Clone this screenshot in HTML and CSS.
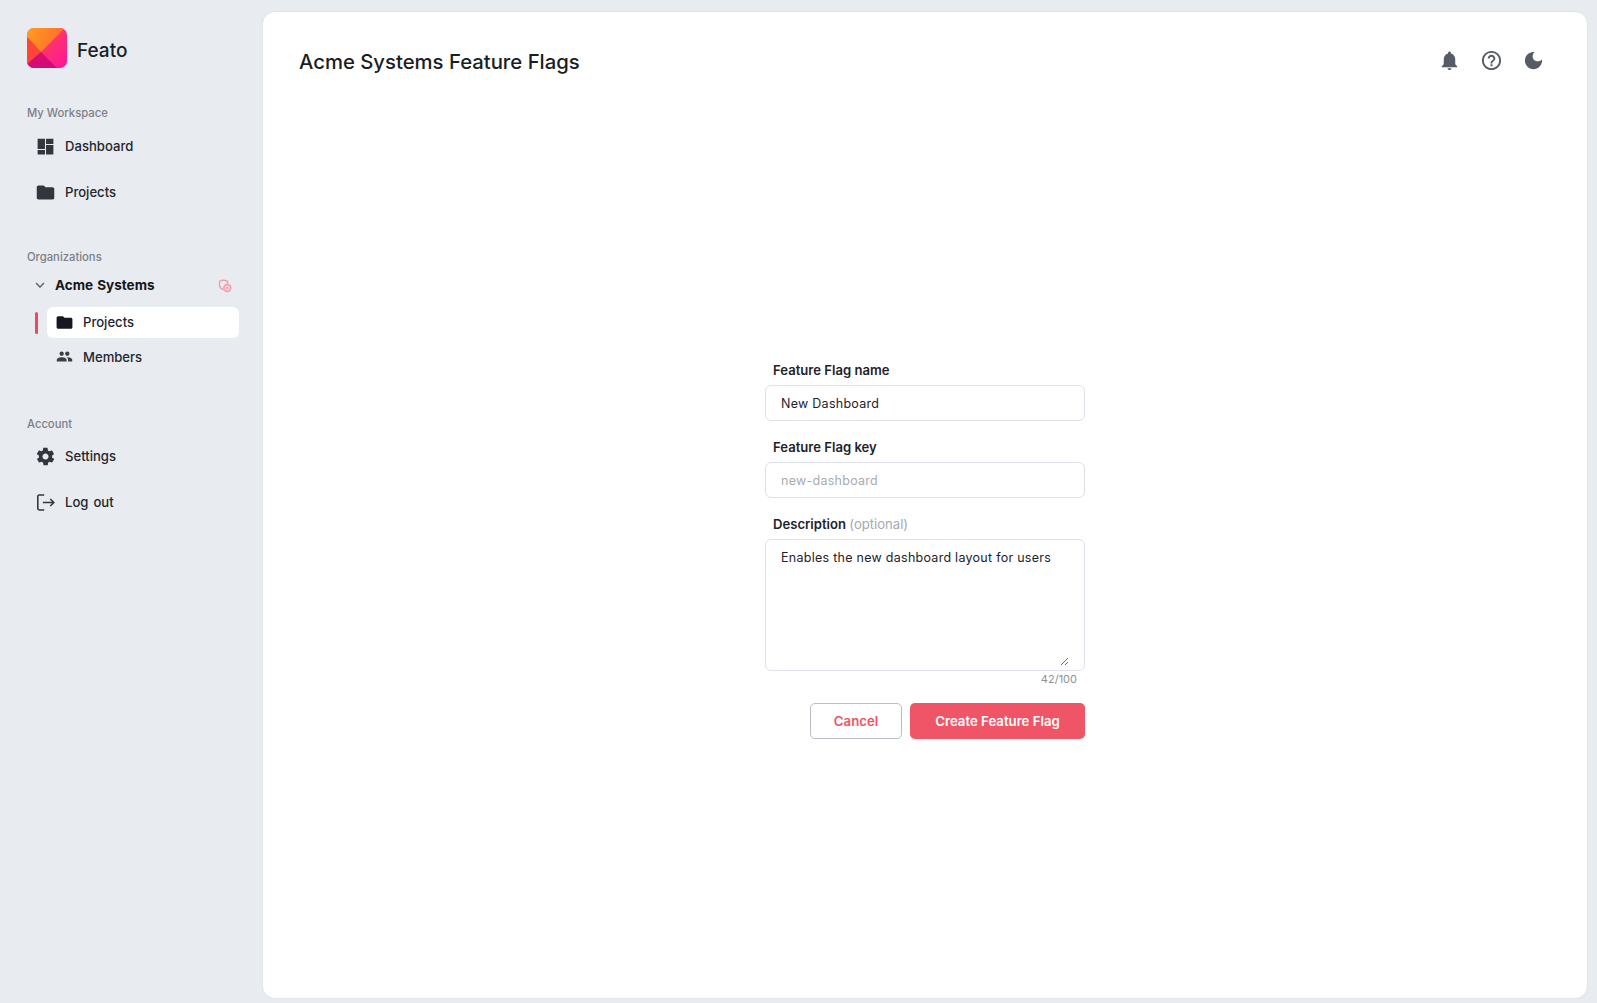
FILE: index.html
```html
<!DOCTYPE html>
<html lang="en">
<head>
<meta charset="utf-8">
<title>Feato</title>
<link rel="stylesheet" href="styles.css">
</head>
<body>
<div class="app">
  <aside class="sidebar">
    <div class="brand">
      <svg class="logo" width="40" height="40" viewBox="0 0 40 40">
        <defs>
          <linearGradient id="lgA" x1="0" y1="0" x2="1" y2="0.3"><stop offset="0" stop-color="#ff9f1c"/><stop offset="1" stop-color="#ff6a30"/></linearGradient>
          <linearGradient id="lgB" x1="0" y1="0" x2="1" y2="1"><stop offset="0" stop-color="#ff5040"/><stop offset="1" stop-color="#ff149b"/></linearGradient>
          <linearGradient id="lgC" x1="0" y1="0" x2="1" y2="1"><stop offset="0" stop-color="#d9105e"/><stop offset="1" stop-color="#d00a86"/></linearGradient>
          <clipPath id="lgClip"><rect width="40" height="40" rx="7"/></clipPath>
        </defs>
        <g clip-path="url(#lgClip)">
          <rect width="40" height="40" fill="url(#lgB)"/>
          <polygon points="0,0 38,0 14,24 0,9" fill="url(#lgA)"/>
          <polygon points="0,9 14,24 0,36" fill="#ff4538"/>
          <polygon points="14,24 30,40 0,40 0,36" fill="url(#lgC)"/>
        </g>
      </svg>
      <span class="brand-name">Feato</span>
    </div>

    <section class="nav-group nav-workspace">
      <h2 class="nav-title">My Workspace</h2>
      <a class="nav-item">
        <svg class="nav-icon" viewBox="0 0 24 24"><path d="M3 3h8.400v11.800H3zM12.600 3H21v6.200h-8.400zM12.600 10.300H21V21h-8.400zM3 15.900h8.400V21H3z"/></svg>
        <span>Dashboard</span>
      </a>
      <a class="nav-item">
        <svg class="nav-icon" viewBox="0 0 24 24"><path d="M10 4H4C2.900 4 2 4.900 2 6v12c0 1.100.9 2 2 2h16c1.100 0 2-.9 2-2V8c0-1.100-.9-2-2-2h-8z"/></svg>
        <span>Projects</span>
      </a>
    </section>

    <section class="nav-group nav-orgs">
      <h2 class="nav-title">Organizations</h2>
      <div class="org-row">
        <svg class="chevron" width="12" height="12" viewBox="0 0 12 12"><path d="M2 4l4 4 4-4" fill="none" stroke="#555c66" stroke-width="1.300"/></svg>
        <span class="org-name">Acme Systems</span>
        <svg class="org-badge" width="14" height="14" viewBox="0 0 14 14"><path d="M1.500 2.200 5.500 1l4 1.200v2.600M1.500 2.200v3.300c0 2.600 1.600 4.300 4 5.300" fill="none" stroke="#f39aa6" stroke-width="1.400"/><circle cx="9.300" cy="9" r="3.500" fill="#f9d0d6" stroke="#f39aa6" stroke-width="1.400"/><circle cx="9.300" cy="9" r="1" fill="#f39aa6"/></svg>
      </div>
      <div class="sub-row">
        <span class="sub-marker"></span>
        <a class="sub-item sub-active">
          <svg class="sub-icon" viewBox="0 0 24 24"><path d="M10 4H4C2.900 4 2 4.900 2 6v12c0 1.100.9 2 2 2h16c1.100 0 2-.9 2-2V8c0-1.100-.9-2-2-2h-8z"/></svg>
          <span>Projects</span>
        </a>
      </div>
      <div class="sub-row">
        <span class="sub-marker sub-marker-off"></span>
        <a class="sub-item">
          <svg class="sub-icon sub-icon-muted" viewBox="-1.500 -1.500 27 27"><path d="M16 11c1.700 0 3-1.300 3-3s-1.300-3-3-3-3 1.300-3 3 1.300 3 3 3zm-8 0c1.700 0 3-1.300 3-3S9.700 5 8 5 5 6.300 5 8s1.300 3 3 3zm0 2c-2.300 0-7 1.200-7 3.500V19h14v-2.500C15 14.200 10.300 13 8 13zm8 0c-.3 0-.6 0-1 .1 1.200.8 2 2 2 3.400V19h6v-2.500c0-2.300-4.700-3.500-7-3.500z"/></svg>
          <span>Members</span>
        </a>
      </div>
    </section>

    <section class="nav-group nav-account">
      <h2 class="nav-title">Account</h2>
      <a class="nav-item">
        <svg class="nav-icon" viewBox="0 0 24 24"><path d="M19.400 13c.1-.3.100-.7.100-1s0-.7-.1-1l2.100-1.600c.2-.2.200-.4.100-.6l-2-3.500c-.1-.2-.4-.3-.6-.2l-2.500 1c-.5-.4-1.100-.7-1.700-1l-.4-2.600c0-.3-.2-.5-.5-.5h-4c-.3 0-.5.200-.5.400l-.4 2.700c-.6.200-1.100.6-1.700 1l-2.500-1c-.2-.1-.5 0-.6.200l-2 3.500c-.1.200-.1.500.1.600L4.600 11c0 .3-.1.700-.1 1s0 .7.1 1l-2.100 1.600c-.2.200-.2.400-.1.600l2 3.500c.1.200.4.300.6.200l2.500-1c.5.400 1.100.7 1.700 1l.4 2.600c0 .3.200.5.500.5h4c.3 0 .5-.2.500-.4l.4-2.700c.6-.2 1.100-.6 1.700-1l2.500 1c.2.100.5 0 .6-.2l2-3.500c.1-.2.100-.5-.1-.6zM12 15.500c-1.900 0-3.500-1.600-3.500-3.500s1.600-3.500 3.500-3.500 3.500 1.600 3.500 3.500-1.600 3.500-3.500 3.500z"/></svg>
        <span>Settings</span>
      </a>
      <a class="nav-item">
        <svg class="nav-icon nav-icon-line" viewBox="0 0 24 24"><path d="M10.500 3.500H5c-1 0-1.800.8-1.800 1.800v13.400c0 1 .8 1.800 1.800 1.800h5.500M9 12h12.500M17.500 8l4 4-4 4"/></svg>
        <span>Log out</span>
      </a>
    </section>
  </aside>

  <main class="panel">
    <header class="topbar">
      <h1 class="page-title">Acme Systems Feature Flags</h1>
      <div class="top-actions">
        <svg class="top-icon" viewBox="0 0 24 24"><path d="M12 22c1.100 0 2-.9 2-2h-4c0 1.100.9 2 2 2zm6-6v-5c0-3.100-1.600-5.600-4.500-6.300V4c0-.8-.7-1.500-1.500-1.500s-1.500.7-1.500 1.500v.7C7.600 5.400 6 7.900 6 11v5l-2 2v1h16v-1z"/></svg>
        <svg class="top-icon" viewBox="0 0 24 24"><path d="M11 18h2v-2h-2zm1-16C6.500 2 2 6.500 2 12s4.500 10 10 10 10-4.500 10-10S17.500 2 12 2zm0 18c-4.400 0-8-3.600-8-8s3.600-8 8-8 8 3.600 8 8-3.600 8-8 8zm0-14c-2.200 0-4 1.800-4 4h2c0-1.100.9-2 2-2s2 .9 2 2c0 2-3 1.800-3 5h2c0-2.300 3-2.500 3-5 0-2.200-1.800-4-4-4z"/></svg>
        <svg class="top-icon" viewBox="0 0 24 24"><path d="M12 3c-5 0-9 4-9 9s4 9 9 9 9-4 9-9c0-.5 0-.9-.1-1.400-1 1.400-2.600 2.300-4.400 2.300-3 0-5.400-2.400-5.400-5.400 0-1.800.9-3.400 2.300-4.400C12.900 3 12.500 3 12 3z"/></svg>
      </div>
    </header>

    <div class="content">
      <form class="flag-form">
        <div class="field">
          <label class="field-label" for="flag-name">Feature Flag name</label>
          <input class="text-input" id="flag-name" type="text" value="New Dashboard">
        </div>
        <div class="field">
          <label class="field-label" for="flag-key">Feature Flag key</label>
          <input class="text-input" id="flag-key" type="text" placeholder="new-dashboard">
        </div>
        <div class="field field-last">
          <label class="field-label" for="flag-desc">Description <span class="optional">(optional)</span></label>
          <div class="area-box">
            <textarea class="text-area" id="flag-desc">Enables the new dashboard layout for users</textarea>
          </div>
          <div class="counter">42/100</div>
        </div>
        <div class="actions">
          <button class="btn btn-cancel" type="button">Cancel</button>
          <button class="btn btn-primary" type="button">Create Feature Flag</button>
        </div>
      </form>
    </div>
  </main>
</div>
</body>
</html>
```
FILE: styles.css
```css
* { box-sizing: border-box; }
html, body { margin: 0; height: 100%; }
body {
  background: #e8ebf0;
  color: #1c1f24;
  font-family: Inter, "Noto Sans", sans-serif;
  overflow: hidden;
}
.app {
  display: flex;
  height: 1003px;
  padding: 12px 10px 5px 0;
}
.sidebar {
  width: 263px;
  flex: none;
  padding: 16px 0 0 27px;
}
.brand {
  display: flex;
  align-items: center;
  gap: 10px;
  height: 40px;
}
.logo { display: block; flex: none; }
.brand-name {
  margin-top: 4px;
  font-size: 19px;
  font-weight: 500;
  color: #1a1e26;
}
.nav-group { display: flex; flex-direction: column; }
.nav-workspace { margin-top: 36px; }
.nav-orgs { margin-top: 33px; }
.nav-account { margin-top: 43px; }
.nav-title {
  margin: 0;
  height: 18px;
  line-height: 18px;
  font-size: 11.250px;
  font-weight: 500;
  color: #7c8087;
}
.nav-item {
  display: flex;
  align-items: center;
  height: 46px;
  padding-left: 8px;
  gap: 9px;
  font-size: 13.100px;
  font-weight: 500;
  word-spacing: 1.500px;
  color: #23262d;
}
.nav-workspace .nav-title + .nav-item { margin-top: 1px; }
.nav-icon { width: 21px; height: 21px; fill: #32363e; flex: none; }
.nav-icon-line { fill: none; stroke: #32363e; stroke-width: 1.800; }
.org-row {
  display: flex;
  align-items: center;
  height: 28px;
  margin-top: 5px;
  padding-left: 7px;
  width: 205px;
}
.org-name {
  margin-left: 9px;
  font-size: 13.500px;
  font-weight: 700;
  color: #14171c;
  flex: 1;
  word-spacing: 1px;
}
.chevron { flex: none; }
.org-badge { flex: none; margin-top: 1px; }
.sub-row {
  display: flex;
  align-items: center;
  gap: 9px;
  padding-left: 8px;
  margin-top: 8px;
}
.sub-row + .sub-row { margin-top: 3px; }
.sub-marker { width: 3px; height: 22px; border-radius: 2px; background: #ea4a5f; flex: none; }
.sub-marker-off { background: transparent; }
.sub-item {
  display: flex;
  align-items: center;
  width: 192px;
  height: 31px;
  padding-left: 8px;
  gap: 9px;
  border-radius: 6px;
  font-size: 13.100px;
  font-weight: 500;
  color: #23262d;
}
.sub-active { background: #fff; padding-bottom: 1px; }
.sub-icon { width: 19px; height: 19px; fill: #15181e; flex: none; }
.sub-icon-muted { fill: #3a3e46; }
.panel {
  flex: 1;
  display: flex;
  flex-direction: column;
  background: #fff;
  border-radius: 12px;
  min-width: 0;
  box-shadow: 0 0 2px rgba(60, 70, 90, .12);
}
.topbar {
  display: flex;
  align-items: center;
  justify-content: space-between;
  height: 98px;
  padding: 0 42px 0 36px;
}
.page-title {
  margin: 0;
  font-size: 20.300px;
  font-weight: 500;
  color: #1a1d22;
}
.top-actions { display: flex; align-items: center; gap: 19px; margin-bottom: 2px; }
.top-icon { width: 23px; height: 23px; fill: #565b65; display: block; }
.content {
  flex: 1;
  display: flex;
  align-items: center;
  justify-content: center;
  padding-bottom: 9px;
}
.flag-form { width: 320px; display: flex; flex-direction: column; }
.field { display: flex; flex-direction: column; margin-bottom: 17px; }
.field-last { margin-bottom: 0; }
.field-label {
  display: block;
  height: 18px;
  line-height: 18px;
  margin: 0 0 6px 8px;
  font-size: 13.100px;
  font-weight: 600;
  color: #1f2329;
}
.optional { font-weight: 400; color: #a6a9af; }
.text-input, .text-area {
  display: block;
  width: 100%;
  background: #fff;
  color: #1f2329;
  font-family: inherit;
  font-size: 12.500px;
  letter-spacing: .27px;
  outline: none;
}
.text-input {
  height: 36px;
  padding: 2px 15px 0;
  border: 1px solid #dfe1e8;
  border-radius: 6px;
}
.text-input::placeholder { color: #a9abb1; opacity: 1; }
.area-box {
  display: flex;
  height: 132px;
  padding: 10px 15px 4px;
  border: 1px solid #dfe1e8;
  border-radius: 6px;
}
.text-area { flex: 1; border: 0; padding: 0; resize: vertical; }
.counter {
  height: 16px;
  line-height: 16px;
  padding-right: 8px;
  text-align: right;
  font-size: 11px;
  color: #8e9197;
}
.actions {
  display: flex;
  justify-content: flex-end;
  gap: 8px;
  margin-top: 16px;
}
.btn {
  height: 36px;
  border-radius: 5px;
  font-family: inherit;
  font-size: 13.200px;
  font-weight: 600;
  cursor: pointer;
}
.btn-cancel {
  width: 92px;
  background: #fff;
  border: 1px solid #b9bdc7;
  color: #ef5266;
}
.btn-primary {
  width: 175px;
  background: #ef5566;
  border: 0;
  color: #fff;
}
```
